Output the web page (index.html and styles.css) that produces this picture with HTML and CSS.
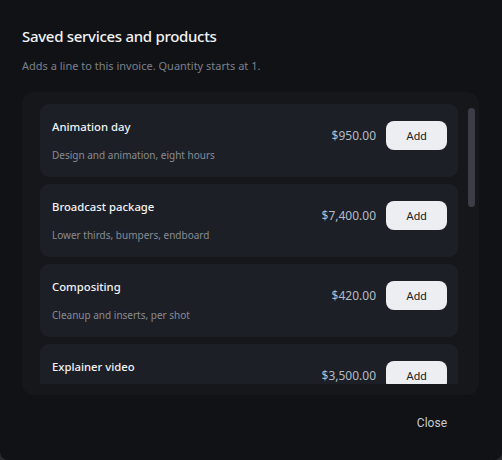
FILE: index.html
```html
<!DOCTYPE html>
<html lang="en">
<head>
    <meta charset="UTF-8">
    <meta name="viewport" content="width=device-width, initial-scale=1.0">
    <title>Saved services and products</title>
    <link rel="stylesheet" href="styles.css">
</head>
<body>
    <div class="dialog">
        <h2 class="dialog-title">Saved services and products</h2>
        <p class="dialog-hint">Adds a line to this invoice. Quantity starts at 1.</p>

        <div class="list-box">
            <div class="list-scroll">
                <div class="item">
                    <div class="item-text">
                        <div class="item-name">Animation day</div>
                        <div class="item-desc">Design and animation, eight hours</div>
                    </div>
                    <div class="item-side">
                        <span class="item-price">$950.00</span>
                        <button class="btn-add">Add</button>
                    </div>
                </div>
                <div class="item">
                    <div class="item-text">
                        <div class="item-name">Broadcast package</div>
                        <div class="item-desc">Lower thirds, bumpers, endboard</div>
                    </div>
                    <div class="item-side">
                        <span class="item-price">$7,400.00</span>
                        <button class="btn-add">Add</button>
                    </div>
                </div>
                <div class="item">
                    <div class="item-text">
                        <div class="item-name">Compositing</div>
                        <div class="item-desc">Cleanup and inserts, per shot</div>
                    </div>
                    <div class="item-side">
                        <span class="item-price">$420.00</span>
                        <button class="btn-add">Add</button>
                    </div>
                </div>
                <div class="item">
                    <div class="item-text">
                        <div class="item-name">Explainer video</div>
                    </div>
                    <div class="item-side">
                        <span class="item-price">$3,500.00</span>
                        <button class="btn-add">Add</button>
                    </div>
                </div>
            </div>
            <div class="scroll-track">
                <div class="scroll-thumb"></div>
            </div>
        </div>

        <div class="dialog-footer">
            <button class="btn-close">Close</button>
        </div>
    </div>
</body>
</html>
```

FILE: styles.css
```css
html, body {
    margin: 0;
    padding: 0;
    height: 100%;
}
body {
    background: #2b2c30;
    font-family: "Noto Sans", "Open Sans", sans-serif;
}
.dialog {
    box-sizing: border-box;
    height: 100%;
    background: #111216;
    border-radius: 0 0 8px 8px;
    padding: 26px 23px 0 22px;
}
.dialog-title {
    margin: 0;
    font-size: 15px;
    line-height: 20px;
    font-weight: 500;
    letter-spacing: -0.3px;
    color: #f1f3f5;
}
.dialog-hint {
    margin: 12px 0 0;
    font-size: 11px;
    line-height: 16px;
    color: #7b808a;
}
.list-box {
    display: flex;
    margin-top: 18px;
    padding: 12px 4px 11px 18px;
    background: #16171b;
    border-radius: 12px;
}
.list-scroll {
    flex: 1;
    height: 280px;
    overflow: hidden;
    display: flex;
    flex-direction: column;
    gap: 7px;
}
.item {
    flex-shrink: 0;
    display: flex;
    align-items: flex-start;
    justify-content: space-between;
    height: 73px;
    box-sizing: border-box;
    padding: 15px 11px 0 12px;
    background: #1d1f26;
    border-radius: 9px;
}
.item-name {
    font-size: 11.3px;
    line-height: 16px;
    font-weight: 500;
    color: #f1f3f5;
}
.item-desc {
    margin-top: 12px;
    font-size: 10px;
    line-height: 16px;
    color: #868b95;
}
.item-side {
    display: flex;
    align-items: center;
    gap: 10px;
    margin-top: 2px;
}
.item-price {
    font-size: 12px;
    color: #b3bcc6;
}
.btn-add {
    width: 61px;
    height: 29px;
    border: none;
    border-radius: 8px;
    background: #eceef1;
    color: #1b1e26;
    font-family: Roboto, sans-serif;
    font-size: 11.5px;
    cursor: pointer;
}
.scroll-track {
    width: 7px;
    margin-left: 10px;
}
.scroll-thumb {
    margin-top: 4px;
    height: 99px;
    background: #3c3e47;
    border-radius: 4px;
}
.dialog-footer {
    display: flex;
    justify-content: flex-end;
    padding: 20px 20px 0 0;
}
.btn-close {
    border: none;
    background: none;
    padding: 0 12px;
    line-height: 16px;
    color: #c7cad0;
    font-family: Roboto, sans-serif;
    font-size: 12px;
    cursor: pointer;
}
```
